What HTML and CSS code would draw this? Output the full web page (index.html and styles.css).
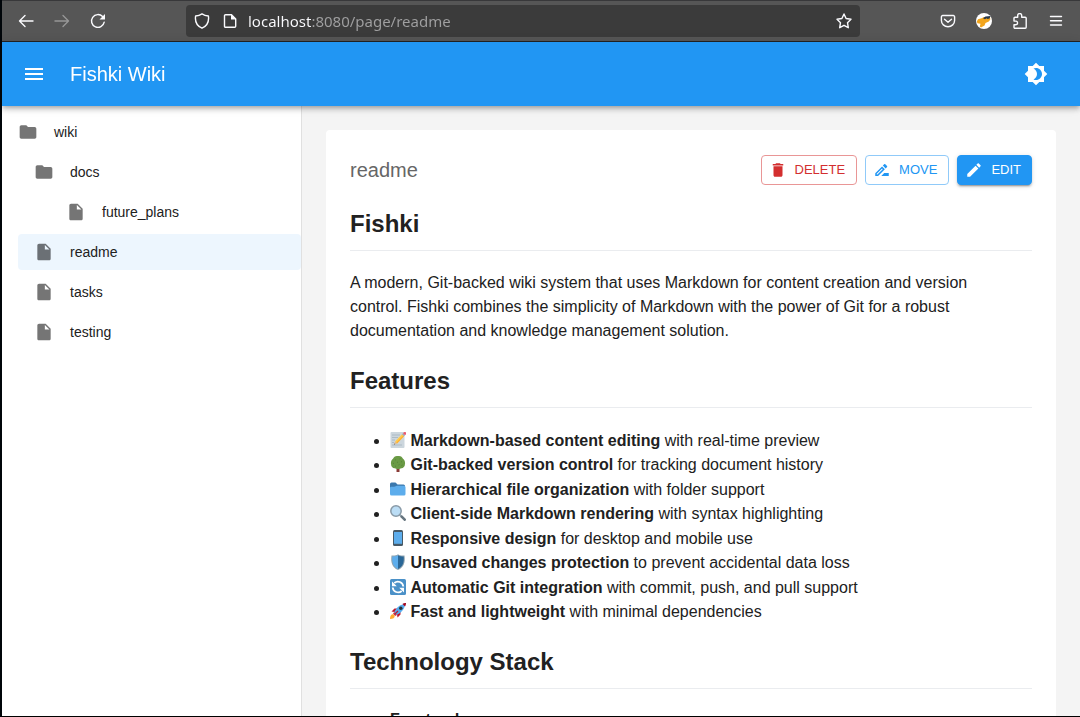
FILE: index.html
```html
<!DOCTYPE html>
<html lang="en">
<head>
<meta charset="utf-8">
<title>Fishki Wiki</title>
<meta name="viewport" content="width=device-width, initial-scale=1">
<link rel="stylesheet" href="styles.css">
</head>
<body>
<svg class="sprite" aria-hidden="true">
  <symbol id="folder" viewBox="0 0 24 24"><path d="M10 4H4c-1.1 0-1.99.9-1.99 2L2 18c0 1.1.9 2 2 2h16c1.1 0 2-.9 2-2V8c0-1.1-.9-2-2-2h-8z"/></symbol>
  <symbol id="file" viewBox="0 0 24 24"><path d="M6 2c-1.1 0-1.99.9-1.99 2L4 20c0 1.1.89 2 1.99 2H18c1.1 0 2-.9 2-2V8l-6-6zm7 7V3.5L18.5 9z"/></symbol>
</svg>
<div class="window">
  <div class="toolbar">
    <button class="tool" aria-label="Back"><svg viewBox="0 0 16 16"><path d="M15 8H1.500M7 2.500L1.500 8L7 13.500"/></svg></button>
    <button class="tool" aria-label="Forward" disabled><svg viewBox="0 0 16 16"><path d="M1 8H14.500M9 2.500L14.500 8L9 13.500"/></svg></button>
    <button class="tool" aria-label="Reload"><svg viewBox="0 0 16 16"><path d="M14.200 9.200A6.400 6.400 0 1 1 12.600 3.600"/><path class="solid" d="M15 1v5.500H9.500z"/></svg></button>
    <div class="urlbar">
      <svg viewBox="0 0 16 16"><path d="M8 .9C6.200 2.200 4.200 2.900 1.600 3C.8 8.500 2.800 12.800 8 15.200C13.200 12.800 15.200 8.500 14.400 3C11.800 2.900 9.800 2.200 8 .9z"/></svg>
      <svg class="page" viewBox="0 0 16 16"><path d="M3.500 1.700h6L13.700 6v7.200a1 1 0 0 1-1 1H3.500a1 1 0 0 1-1-1V2.700a1 1 0 0 1 1-1z"/><path class="solid" d="M9 1.200V6.500h5z"/></svg>
      <input class="address" type="text" aria-label="Address" value="localhost:8080/page/readme" spellcheck="false">
      <button class="star" aria-label="Bookmark this page"><svg viewBox="0 0 16 16"><path d="M8 1L10.100 5.500L15 6.200L11.500 9.700L12.300 14.700L8 12.300L3.700 14.700L4.500 9.700L1 6.200L5.900 5.500z"/></svg></button>
    </div>
    <button class="tool" aria-label="Pocket"><svg viewBox="0 0 16 16"><path d="M2.700 2.500h10.600a1.300 1.300 0 0 1 1.300 1.300V7.500a6.600 6.200 0 0 1-13.200 0V3.800a1.300 1.300 0 0 1 1.300-1.300zM4.500 6.200L8 9.300L11.500 6.200"/></svg></button>
    <button class="tool" aria-label="Profile"><svg viewBox="0 0 16 16"><circle cx="8" cy="8" r="8" fill="#fff" stroke="none"/><path d="M.8 8.500L2 6.300L5.500 5.300L8 4L14 4L14.300 6.500L12.800 8.600L9.500 10L8.500 12.500L5 14.600L3.800 13.500L4.500 10.800L1.500 10.300z" fill="#f2a51d" stroke="none"/><path d="M7 5.300L9.500 3.600L14.500 3L13.500 5.500L11.500 6L10.500 5.300L9 6.300z" fill="#26384d" stroke="none"/></svg></button>
    <button class="tool" aria-label="Extensions"><svg viewBox="0 0 16 16"><path d="M2 5.200a1 1 0 0 1 1-1H5.700V2.500a2 2 0 0 1 4 0V4.200h3.500a1 1 0 0 1 1 1V14.200a1 1 0 0 1-1 1H3a1 1 0 0 1-1-1V11.700H3.800a1.800 1.800 0 0 0 0-3.600H2z"/></svg></button>
    <button class="tool" aria-label="Open menu"><svg viewBox="0 0 16 16"><path d="M2.500 3.500h11M2.500 7.800h11M2.500 12h11"/></svg></button>
  </div>

  <header class="appbar">
    <button class="appbar-button" aria-label="Toggle sidebar"><svg viewBox="0 0 24 24"><path d="M3 18h18v-2H3zm0-5h18v-2H3zm0-7v2h18V6z"/></svg></button>
    <a class="brand" href="/">Fishki Wiki</a>
    <button class="appbar-button" aria-label="Toggle dark mode"><svg viewBox="0 0 24 24"><path d="M20 8.690V4h-4.690L12 .69 8.690 4H4v4.690L.69 12 4 15.310V20h4.690L12 23.310 15.310 20H20v-4.690L23.310 12zM12 18c-.89 0-1.740-.2-2.500-.55C11.560 16.500 13 14.420 13 12s-1.440-4.500-3.500-5.450C10.260 6.200 11.110 6 12 6c3.310 0 6 2.690 6 6s-2.690 6-6 6z"/></svg></button>
  </header>

  <div class="workspace">
    <nav class="sidebar" aria-label="Files">
      <button class="node root"><svg><use href="#folder"/></svg>wiki</button>
      <div class="branch">
        <button class="node"><svg><use href="#folder"/></svg>docs</button>
        <div class="leafs"><a class="node" href="/page/docs/future_plans"><svg><use href="#file"/></svg>future_plans</a></div>
        <a class="node current" href="/page/readme" aria-current="page"><svg><use href="#file"/></svg>readme</a>
        <a class="node" href="/page/tasks"><svg><use href="#file"/></svg>tasks</a>
        <a class="node" href="/page/testing"><svg><use href="#file"/></svg>testing</a>
      </div>
    </nav>

    <main class="content">
      <article class="paper">
        <div class="paper-head">
          <span class="page-name">readme</span>
          <button class="action danger"><svg viewBox="0 0 24 24"><path d="M6 19c0 1.100.9 2 2 2h8c1.100 0 2-.9 2-2V7H6zM19 4h-3.500l-1-1h-5l-1 1H5v2h14z"/></svg>DELETE</button>
          <button class="action"><svg viewBox="0 0 24 24"><path d="m15 16-4 4h10v-4zm-2.940-8.810L3 16.250V20h3.750l9.060-9.060zM5.920 18H5v-.92l7.060-7.060.92.92zm12.790-9.960c.39-.39.39-1.020 0-1.410l-2.340-2.340c-.2-.2-.45-.29-.71-.29s-.51.1-.7.290l-1.830 1.830 3.750 3.750z"/></svg>MOVE</button>
          <button class="action filled"><svg viewBox="0 0 24 24"><path d="M3 17.250V21h3.750L17.810 9.940l-3.750-3.750zM20.710 7.040c.39-.39.39-1.020 0-1.410l-2.340-2.340c-.39-.39-1.020-.39-1.410 0l-1.830 1.830 3.750 3.750z"/></svg>EDIT</button>
        </div>

        <h1>Fishki</h1>
        <p>A modern, Git-backed wiki system that uses Markdown for content creation and version control. Fishki combines the simplicity of Markdown with the power of Git for a robust documentation and knowledge management solution.</p>

        <h2>Features</h2>
        <ul class="features">
          <li><svg class="emoji" viewBox="0 0 16 16"><path fill="#ccd6dd" d="M1.500 0h12a1 1 0 0 1 1 1v14a1 1 0 0 1-1 1h-12a1 1 0 0 1-1-1V1a1 1 0 0 1 1-1z"/><path stroke="#99aab5" stroke-width=".6" d="M2 3h8M2 5.500h6M2 8h3M2 10.500h2M2 13h10"/><path fill="#ffcc4d" d="M5 9.500L12 2.300L14 4.300L7 11.500z"/><path fill="#ffac33" d="M6.200 10.700L13.200 3.500L14 4.300L7 11.500z"/><path fill="#e1b98b" d="M5 9.500L7 11.500L4 12.500z"/><path fill="#292f33" d="M4.300 11.500L5 12.200L4 12.500z"/><path fill="#99aab5" d="M12 2.300L13 1.300L15 3.300L14 4.300z"/><path fill="#ea596e" d="M13 1.300L14.200.1L16 .3V2.200L15 3.300z"/></svg> <strong>Markdown-based content editing</strong> with real-time preview</li>
          <li><svg class="emoji" viewBox="0 0 16 16"><path fill="#8a3b36" d="M6.500 11h3v5h-3z"/><path fill="#6a9a45" d="M8 0C10.500-.2 12.200 1 13 2.700C14.500 4 15.500 6 14.900 8.300C15 10.500 13.300 12 11.500 12.300C9 13.400 7 13.400 4.600 12.300C2.500 12.100 1 10.500 1.100 8.300C.5 6 1.500 4 3 2.700C3.800 1 5.500-.2 8 0z"/><path fill="none" stroke="#4e7d32" stroke-width=".7" d="M5 3.500l1 .7M9.500 3l1-.5M3 7l1 .7M7 6l1 .5M11 6l1-.4M5 10l1 .4M8.500 9l1-.5M11.500 9.500l1-.5"/></svg> <strong>Git-backed version control</strong> for tracking document history</li>
          <li><svg class="emoji" viewBox="0 0 16 16"><path fill="#3b78ad" d="M0 3a1.500 1.500 0 0 1 1.500-1.500H5C6.500 1.500 6.700 3.500 8 3.500h5.500A1.500 1.500 0 0 1 15 5v8H0z"/><path fill="#5dadec" d="M0 7a1.200 1.200 0 0 1 1.200-1.200h3C5.500 5.800 5.800 4.800 7 4.800h7a1.500 1.500 0 0 1 1.500 1.500V13a1.500 1.500 0 0 1-1.500 1.500H1.500A1.500 1.500 0 0 1 0 13z"/></svg> <strong>Hierarchical file organization</strong> with folder support</li>
          <li><svg class="emoji" viewBox="0 0 16 16"><path stroke="#9aaab4" stroke-width="2" d="M9 9l3 3"/><path stroke="#66757f" stroke-width="2.600" stroke-linecap="round" d="M11.700 11.700L14.700 14.700"/><circle cx="6" cy="6" r="5.200" fill="#bbddf5" stroke="#8899a6" stroke-width="1.500"/></svg> <strong>Client-side Markdown rendering</strong> with syntax highlighting</li>
          <li><svg class="emoji" viewBox="0 0 16 16"><rect x="3" width="10" height="16" rx="1.500" fill="#475966"/><path fill="#5dadec" d="M4 2h8v11.800H4z"/></svg> <strong>Responsive design</strong> for desktop and mobile use</li>
          <li><svg class="emoji" viewBox="0 0 16 16"><path fill="#8fa3b0" d="M8 .2C6 1.800 4 1.500 1.500 1.500C.5 8 2 13.500 8 16C14 13.500 15.500 8 14.500 1.500C12 1.500 10 1.800 8 .2z"/><path fill="#5dadec" d="M8 1.300C6 2.500 4.500 2.500 2.300 2.500C1.800 8 3 12.700 8 14.900z"/><path fill="#2a6797" d="M8 1.300C10 2.500 11.500 2.500 13.700 2.500C14.200 8 13 12.700 8 14.900z"/></svg> <strong>Unsaved changes protection</strong> to prevent accidental data loss</li>
          <li><svg class="emoji" viewBox="0 0 16 16"><rect width="16" height="16" rx="1.500" fill="#4b91c8"/><path fill="none" stroke="#fff" stroke-width="1.800" d="M13.300 7.500A5.400 5.400 0 0 0 4.300 4M2.700 8.500a5.400 5.400 0 0 0 9 3.500"/><path fill="#fff" d="M2 2.500V7.300H6.800zM14 13.500V8.700H9.200z"/></svg> <strong>Automatic Git integration</strong> with commit, push, and pull support</li>
          <li><svg class="emoji" viewBox="0 0 16 16"><path fill="#be1931" d="M1.500 8.500L4.500 5.500L7.500 5.500L4.500 9zM7.500 14.500L10.500 11.500V8.500L7 11.500z"/><path fill="#ffac33" d="M0 16C0 13 1 11 3.500 11.200L4.800 12.500C5 15 3 16 0 16z"/><path fill="#dd2e44" d="M3 10.500L5.500 13L8.500 10.500L5.500 7.500z"/><path fill="#55acee" d="M4.200 10C5.500 5.500 9 2 13.500 1.200L14.800 2.500C14 7 10.500 10.500 6 11.800z"/><path fill="#a0041e" d="M16 0C14.500 0 13.300.4 12.500 1L15 3.500C15.600 2.700 16 1.500 16 0z"/><circle cx="10.800" cy="5.200" r="1.700" fill="#292f33"/><path stroke="#be1931" stroke-width="1.200" d="M4.500 11.500L8 8"/></svg> <strong>Fast and lightweight</strong> with minimal dependencies</li>
        </ul>

        <h2>Technology Stack</h2>
        <ul>
          <li><strong>Frontend:</strong></li>
        </ul>
      </article>
    </main>
  </div>
</div>
</body>
</html>
```

FILE: styles.css
```css
* { box-sizing: border-box; }

body {
  margin: 0;
  background: #000;
  color: #212121;
  font: 16px/24px "Liberation Sans", Arial, sans-serif;
}

button {
  border: 0;
  padding: 0;
  background: none;
  color: inherit;
  font: inherit;
  cursor: pointer;
}

.sprite { display: none; }

.window {
  display: flex;
  flex-direction: column;
  height: 100vh;
  border-left: 2px solid #000509;
  border-bottom: 1px solid #000;
}

/* Browser toolbar */
.toolbar {
  flex: none;
  display: flex;
  align-items: center;
  height: 42px;
  padding: 0 6px;
  border-top: 1px solid #38383a;
  border-bottom: 1px solid #222;
  background: #565656;
  color: #fbfbfe;
}

.toolbar svg {
  display: block;
  width: 16px;
  height: 16px;
  fill: none;
  stroke: currentColor;
  stroke-width: 1.4;
  stroke-linecap: round;
  stroke-linejoin: round;
}

.toolbar .solid { fill: currentColor; stroke: none; }

.tool {
  display: grid;
  place-items: center;
  width: 36px;
  height: 32px;
}

.tool:disabled { color: #979797; }

.urlbar {
  flex: 1;
  display: flex;
  align-items: center;
  height: 32px;
  margin: 0 70px;
  padding: 0 8px;
  border-radius: 4px;
  background: #3b3b3b;
}

.urlbar .page { margin-left: 12px; }

.address {
  flex: 1;
  min-width: 0;
  margin-left: 10px;
  padding: 0;
  border: 0;
  outline: 0;
  background: linear-gradient(90deg, #fbfbfe 63px, #a0a0a1 63px);
  background-clip: text;
  -webkit-background-clip: text;
  color: transparent;
  font: 15px/24px "Noto Sans", sans-serif;
}

/* Application bar */
.appbar {
  position: relative;
  flex: none;
  display: flex;
  align-items: center;
  height: 64px;
  padding: 0 32px 0 20px;
  background: #2196f3;
  color: #fff;
  box-shadow: 0 2px 4px -1px rgba(0, 0, 0, .2), 0 4px 5px rgba(0, 0, 0, .14), 0 1px 10px rgba(0, 0, 0, .12);
}

.appbar-button svg {
  display: block;
  width: 24px;
  height: 24px;
  fill: currentColor;
}

.brand {
  flex: 1;
  margin-left: 24px;
  color: inherit;
  font-size: 20px;
  line-height: 32px;
  text-decoration: none;
}

.workspace {
  flex: 1;
  display: flex;
  min-height: 0;
}

/* File tree */
.sidebar {
  flex: none;
  width: 300px;
  padding-top: 8px;
  border-right: 1px solid #e0e0e0;
  background: #fff;
}

.branch { padding-left: 16px; }
.leafs { padding-left: 32px; }

.node {
  display: flex;
  align-items: center;
  gap: 16px;
  width: 100%;
  height: 36px;
  margin-bottom: 4px;
  padding-left: 16px;
  border-radius: 4px;
  color: #212121;
  font-size: 14px;
  line-height: 20px;
  text-decoration: none;
}

.node svg {
  width: 20px;
  height: 20px;
  fill: #757575;
}

.current { background: #edf6fe; }
.current svg { fill: #6b7075; }

/* Page */
.content {
  flex: 1;
  min-width: 0;
  padding: 24px;
  overflow: auto;
  scrollbar-width: none;
  background: #f4f4f4;
}

.paper {
  padding: 24px;
  border-radius: 4px;
  background: #fff;
}

.paper-head {
  display: flex;
  align-items: center;
  gap: 8px;
  height: 32px;
}

.page-name {
  flex: 1;
  color: #666;
  font-size: 20px;
  line-height: 32px;
}

.action {
  display: flex;
  align-items: center;
  gap: 8px;
  height: 30px;
  padding: 0 11px 0 7px;
  border: 1px solid #90caf9;
  border-radius: 4px;
  color: #2196f3;
  font-size: 13px;
}

.action svg {
  width: 18px;
  height: 18px;
  fill: currentColor;
}

.danger { border-color: #e99696; color: #d32f2f; }

.filled {
  padding-right: 10px;
  border-color: #2196f3;
  background: #2196f3;
  color: #fff;
  box-shadow: 0 3px 1px -2px rgba(0, 0, 0, .2), 0 2px 2px rgba(0, 0, 0, .14), 0 1px 5px rgba(0, 0, 0, .12);
}

h1, h2 {
  margin: 23px 0 19px;
  padding-bottom: 11px;
  border-bottom: 1px solid #eaecef;
  font-size: 24px;
  line-height: 30px;
}

p { margin: 0; padding: 1px 24px 0 0; }

ul { margin: 0; padding-left: 40px; }
.features { padding-top: 2px; }
.features li:nth-child(even):not(:last-child) { padding-bottom: 1px; }

.emoji {
  width: 16px;
  height: 16px;
  vertical-align: -2px;
}
```
